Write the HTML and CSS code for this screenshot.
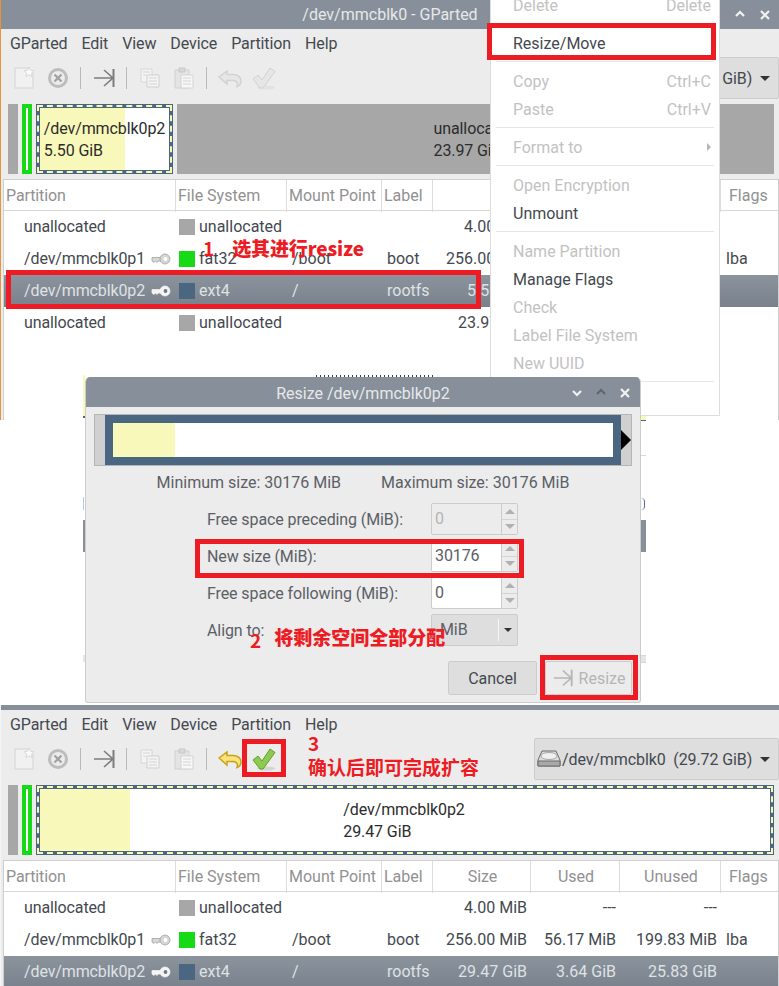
FILE: index.html
```html
<!DOCTYPE html>
<html>

<head>
    <meta charset="utf-8">
    <title>GParted resize</title>
    <link rel="stylesheet" href="styles.css">
</head>

<body>
    <!-- shared toolbar icons -->
    <svg class="defs" width="0" height="0">
        <symbol id="i-new" viewBox="0 0 24 24">
            <path d="M3 2h13l5 5v15H3z" fill="#f1f1f1" stroke="#dcdcdc" stroke-width="1.5"/>
            <path d="M17 1l1.6 3.2 3.4.5-2.5 2.4.6 3.4-3.1-1.6-3 1.6.6-3.4-2.500-2.400 3.400-.5z" fill="#fafafa" stroke="#d8d8d8"/>
        </symbol>
        <symbol id="i-cancel" viewBox="0 0 24 24">
            <circle cx="12" cy="12" r="8.5" fill="#ececec" stroke="#bdbdbd" stroke-width="3"/>
            <path d="M8.5 8.5l7 7M15.5 8.5l-7 7" stroke="#a0a0a0" stroke-width="2.2"/>
        </symbol>
        <symbol id="i-apply" viewBox="0 0 24 24">
            <path d="M2 12h19M12 4l9 8-9 8" fill="none" stroke="currentColor" stroke-width="1.6"/>
            <path d="M21.5 3v18" stroke="currentColor" stroke-width="2"/>
        </symbol>
        <symbol id="i-copy" viewBox="0 0 24 24">
            <path d="M3 3h11v13H3z" fill="#f4f4f4" stroke="#d6d6d6"/>
            <path d="M9 9h12v12H9z" fill="#f4f4f4" stroke="#cfcfcf"/>
            <path d="M5 6h7M5 9h3M11 12h8M11 15h8M11 18h8" stroke="#d4d4d4"/>
        </symbol>
        <symbol id="i-paste" viewBox="0 0 24 24">
            <path d="M3 4h14v18H3z" fill="#e4e4e4" stroke="#d0d0d0"/>
            <path d="M7 2h6v4H7z" fill="#d8d8d8" stroke="#c8c8c8"/>
            <path d="M9 9h12v13H9z" fill="#f7f7f7" stroke="#d4d4d4"/>
            <path d="M11 12h8M11 15h8M11 18h8" stroke="#d4d4d4"/>
        </symbol>
        <symbol id="i-undo" viewBox="0 0 24 24">
            <path d="M1 11L9 5v3.500h6c5 0 8 3 8 6.500 0 2.500-1.500 4.500-4 5.500 1.200-3 0-6-4-6H9V18z" fill="var(--ic-fill)" stroke="var(--ic-line)" stroke-width="1.5"/>
        </symbol>
        <symbol id="i-check" viewBox="0 0 24 24">
            <ellipse cx="14" cy="21.500" rx="9" ry="2" fill="var(--ic-shadow)"/>
            <path d="M1 13l5-4 4 5 8-12 5 3.500L11 22H8z" fill="var(--ic-fill)" stroke="var(--ic-line)"/>
        </symbol>
        <symbol id="i-key" viewBox="0 0 20 12">
            <path d="M1 4.500h9v3.500H7L6 9.500 4.500 8 3 9.500 1 8z" fill="var(--key-fill)" stroke="var(--key-line)" stroke-width=".7"/>
            <circle cx="14" cy="6" r="5" fill="var(--key-fill)" stroke="var(--key-line)" stroke-width=".7"/>
            <circle cx="14.500" cy="6" r="1.900" fill="var(--key-hole)"/>
        </symbol>
        <symbol id="i-disk" viewBox="0 0 24 18">
            <path d="M5 1h14l4 9v6H1v-6z" fill="#dcdcdc" stroke="#6b6b6b"/>
            <ellipse cx="12" cy="6" rx="8" ry="3.500" fill="#f0f0f0" stroke="#a8a8a8"/>
            <path d="M1 11h22v5H1z" fill="#a9a9a9" stroke="#6b6b6b"/>
        </symbol>
        <symbol id="i-wm-up" viewBox="0 0 12 12">
            <path d="M2 8l4-4 4 4" fill="none" stroke="currentColor" stroke-width="2.200"/>
        </symbol>
        <symbol id="i-wm-down" viewBox="0 0 12 12">
            <path d="M2 4l4 4 4-4" fill="none" stroke="currentColor" stroke-width="2.200"/>
        </symbol>
        <symbol id="i-wm-close" viewBox="0 0 12 12">
            <path d="M2 2l8 8M10 2l-8 8" fill="none" stroke="currentColor" stroke-width="2.200"/>
        </symbol>
    </svg>

    <div class="page">

        <!-- first shot: partition selected -->
        <section class="win win-top">
            <div class="titlebar">
                <span class="title-text">/dev/mmcblk0 - GParted</span>
                <svg class="wm-btn wm-up" width="12" height="12"><use href="#i-wm-up"/></svg>
                <svg class="wm-btn wm-close" width="12" height="12"><use href="#i-wm-close"/></svg>
            </div>
            <nav class="menubar">
                <span>GParted</span><span>Edit</span><span>View</span><span>Device</span><span>Partition</span><span>Help</span>
            </nav>
            <div class="toolbar">
                <span class="tool"><svg width="24" height="24"><use href="#i-new"/></svg></span>
                <span class="tool"><svg width="24" height="24"><use href="#i-cancel"/></svg></span>
                <span class="tool-sep"></span>
                <span class="tool tool-dark"><svg width="24" height="24"><use href="#i-apply"/></svg></span>
                <span class="tool-sep"></span>
                <span class="tool"><svg width="24" height="24"><use href="#i-copy"/></svg></span>
                <span class="tool"><svg width="24" height="24"><use href="#i-paste"/></svg></span>
                <span class="tool-sep"></span>
                <span class="tool tool-off"><svg width="24" height="24"><use href="#i-undo"/></svg></span>
                <span class="tool tool-off"><svg width="24" height="24"><use href="#i-check"/></svg></span>
                <div class="device-combo">
                    <svg width="24" height="18"><use href="#i-disk"/></svg>
                    <span class="device-name">/dev/mmcblk0&nbsp; (29.72 GiB)</span>
                    <span class="caret"></span>
                </div>
            </div>
            <div class="graph">
                <span class="g-unalloc g-small"></span>
                <span class="g-fat"></span>
                <div class="g-part g-part-small">
                    <div class="g-label">/dev/mmcblk0p2<br>5.50 GiB</div>
                </div>
                <div class="g-unalloc g-rest">
                    <div class="g-label">unallocated<br>23.97 GiB</div>
                </div>
            </div>
            <div class="table">
                <div class="row head">
                    <span class="c-part">Partition</span>
                    <span class="c-fs">File System</span>
                    <span class="c-mount">Mount Point</span>
                    <span class="c-label">Label</span>
                    <span class="c-num">Size</span>
                    <span class="c-num">Used</span>
                    <span class="c-num">Unused</span>
                    <span class="c-flags">Flags</span>
                </div>
                <div class="row">
                    <span class="c-part">unallocated</span>
                    <span class="c-fs"><i class="swatch sw-gray"></i>unallocated</span>
                    <span></span><span></span>
                    <span class="c-num">4.00 MiB</span><span class="c-num">---</span><span class="c-num">---</span><span></span>
                </div>
                <div class="row">
                    <span class="c-part">/dev/mmcblk0p1<svg class="key" width="20" height="12"><use href="#i-key"/></svg></span>
                    <span class="c-fs"><i class="swatch sw-green"></i>fat32</span>
                    <span class="c-mount">/boot</span>
                    <span class="c-label">boot</span>
                    <span class="c-num">256.00 MiB</span><span class="c-num">56.17 MiB</span><span class="c-num">199.83 MiB</span>
                    <span class="c-flags">lba</span>
                </div>
                <div class="row selected">
                    <span class="c-part">/dev/mmcblk0p2<svg class="key" width="20" height="12"><use href="#i-key"/></svg></span>
                    <span class="c-fs"><i class="swatch sw-navy"></i>ext4</span>
                    <span class="c-mount">/</span>
                    <span class="c-label">rootfs</span>
                    <span class="c-num">5.50 GiB</span><span class="c-num">3.64 GiB</span><span class="c-num">1.86 GiB</span><span></span>
                </div>
                <div class="row">
                    <span class="c-part">unallocated</span>
                    <span class="c-fs"><i class="swatch sw-gray"></i>unallocated</span>
                    <span></span><span></span>
                    <span class="c-num">23.97 GiB</span><span class="c-num">---</span><span class="c-num">---</span><span></span>
                </div>
            </div>
        </section>

        <!-- partition context menu -->
        <div class="menu">
            <div class="item off"><span>Delete</span><span>Delete</span></div>
            <div class="sep"></div>
            <div class="item">Resize/Move</div>
            <div class="sep"></div>
            <div class="item off"><span>Copy</span><span>Ctrl+C</span></div>
            <div class="item off"><span>Paste</span><span>Ctrl+V</span></div>
            <div class="sep"></div>
            <div class="item off"><span>Format to</span><span class="sub-arrow"></span></div>
            <div class="sep"></div>
            <div class="item off">Open Encryption</div>
            <div class="item">Unmount</div>
            <div class="sep"></div>
            <div class="item off">Name Partition</div>
            <div class="item">Manage Flags</div>
            <div class="item off">Check</div>
            <div class="item off">Label File System</div>
            <div class="item off">New UUID</div>
            <div class="sep"></div>
        </div>

        <!-- bits of a third window showing round the dialog -->
        <span class="scrap sc-text"></span>
        <span class="scrap sc-l1"></span>
        <span class="scrap sc-l2"></span>
        <span class="scrap sc-l3"></span>
        <span class="scrap sc-l4"></span>
        <span class="scrap sc-l5"></span>
        <span class="scrap sc-r1"></span>
        <span class="scrap sc-r2"></span>
        <span class="scrap sc-r3"></span>
        <span class="scrap sc-r4"></span>
        <span class="scrap sc-r5"></span>

        <!-- resize dialog -->
        <div class="dialog">
            <div class="dlg-title">
                <span class="title-text">Resize /dev/mmcblk0p2</span>
                <svg class="wm-btn dlg-down" width="12" height="12"><use href="#i-wm-down"/></svg>
                <svg class="wm-btn dlg-up" width="12" height="12"><use href="#i-wm-up"/></svg>
                <svg class="wm-btn dlg-close" width="12" height="12"><use href="#i-wm-close"/></svg>
            </div>
            <div class="slider">
                <div class="slider-part">
                    <div class="slider-fill"></div>
                </div>
                <span class="slider-grip"></span>
            </div>
            <div class="limits">
                <span>Minimum size: 30176 MiB</span>
                <span>Maximum size: 30176 MiB</span>
            </div>
            <div class="form">
                <label>Free space preceding (MiB):</label>
                <div class="spin spin-off"><span class="spin-val">0</span><span class="spin-btns"><i class="up"></i><i class="down"></i></span></div>
                <label>New size (MiB):</label>
                <div class="spin"><span class="spin-val">30176</span><span class="spin-btns"><i class="up"></i><i class="down"></i></span></div>
                <label>Free space following (MiB):</label>
                <div class="spin"><span class="spin-val">0</span><span class="spin-btns"><i class="up"></i><i class="down"></i></span></div>
                <label>Align to:</label>
                <div class="align-combo"><span class="align-val">MiB</span><span class="align-btn"><span class="caret caret-small"></span></span></div>
            </div>
            <div class="dlg-buttons">
                <button class="btn btn-cancel">Cancel</button>
                <button class="btn btn-resize"><svg width="22" height="22"><use href="#i-apply"/></svg>Resize</button>
            </div>
        </div>

        <!-- second shot: operation queued -->
        <section class="win win-bottom">
            <div class="titlebar titlebar-cut"></div>
            <nav class="menubar">
                <span>GParted</span><span>Edit</span><span>View</span><span>Device</span><span>Partition</span><span>Help</span>
            </nav>
            <div class="toolbar">
                <span class="tool"><svg width="24" height="24"><use href="#i-new"/></svg></span>
                <span class="tool"><svg width="24" height="24"><use href="#i-cancel"/></svg></span>
                <span class="tool-sep"></span>
                <span class="tool tool-dark"><svg width="24" height="24"><use href="#i-apply"/></svg></span>
                <span class="tool-sep"></span>
                <span class="tool"><svg width="24" height="24"><use href="#i-copy"/></svg></span>
                <span class="tool"><svg width="24" height="24"><use href="#i-paste"/></svg></span>
                <span class="tool-sep"></span>
                <span class="tool tool-undo"><svg width="24" height="24"><use href="#i-undo"/></svg></span>
                <span class="tool tool-ok"><svg width="24" height="24"><use href="#i-check"/></svg></span>
                <div class="device-combo">
                    <svg width="24" height="18"><use href="#i-disk"/></svg>
                    <span class="device-name">/dev/mmcblk0&nbsp; (29.72 GiB)</span>
                    <span class="caret"></span>
                </div>
            </div>
            <div class="graph">
                <span class="g-unalloc g-small"></span>
                <span class="g-fat"></span>
                <div class="g-part g-part-full">
                    <div class="g-label">/dev/mmcblk0p2<br>29.47 GiB</div>
                </div>
            </div>
            <div class="table">
                <div class="row head">
                    <span class="c-part">Partition</span>
                    <span class="c-fs">File System</span>
                    <span class="c-mount">Mount Point</span>
                    <span class="c-label">Label</span>
                    <span class="c-num c-mid">Size</span>
                    <span class="c-num c-mid">Used</span>
                    <span class="c-num c-mid">Unused</span>
                    <span class="c-flags">Flags</span>
                </div>
                <div class="row">
                    <span class="c-part">unallocated</span>
                    <span class="c-fs"><i class="swatch sw-gray"></i>unallocated</span>
                    <span></span><span></span>
                    <span class="c-num">4.00 MiB</span><span class="c-num">---</span><span class="c-num">---</span><span></span>
                </div>
                <div class="row">
                    <span class="c-part">/dev/mmcblk0p1<svg class="key" width="20" height="12"><use href="#i-key"/></svg></span>
                    <span class="c-fs"><i class="swatch sw-green"></i>fat32</span>
                    <span class="c-mount">/boot</span>
                    <span class="c-label">boot</span>
                    <span class="c-num">256.00 MiB</span><span class="c-num">56.17 MiB</span><span class="c-num">199.83 MiB</span>
                    <span class="c-flags">lba</span>
                </div>
                <div class="row selected">
                    <span class="c-part">/dev/mmcblk0p2<svg class="key" width="20" height="12"><use href="#i-key"/></svg></span>
                    <span class="c-fs"><i class="swatch sw-navy"></i>ext4</span>
                    <span class="c-mount">/</span>
                    <span class="c-label">rootfs</span>
                    <span class="c-num">29.47 GiB</span><span class="c-num">3.64 GiB</span><span class="c-num">25.83 GiB</span><span></span>
                </div>
            </div>
        </section>

        <!-- red annotations -->
        <span class="mark mark-menu"></span>
        <span class="mark mark-row"></span>
        <span class="mark mark-size"></span>
        <span class="mark mark-resize"></span>
        <span class="mark mark-check"></span>
        <span class="note note-1">1<b>选其进行resize</b></span>
        <span class="note note-2">2<b>将剩余空间全部分配</b></span>
        <span class="note note-3">3<br>确认后即可完成扩容</span>
    </div>
</body>

</html>
```

FILE: styles.css
```css
body {
    margin: 0;
    background-color: #ffffff;
    font-family: "Roboto", "Noto Sans CJK SC", sans-serif;
    font-size: 16px;
    color: #43494f;
}

.defs {
    position: absolute;
}

.page {
    position: relative;
    width: 779px;
    height: 986px;
    overflow: hidden;
    background-color: #ffffff;
}

/* main windows */
.win {
    position: absolute;
    left: 0;
    width: 779px;
    overflow: hidden;
    background-color: #ececec;
}

.win-top {
    top: 0;
    height: 420px;
    border-left: 1px solid #e8953a;
    box-sizing: border-box;
}

.win-bottom {
    top: 705px;
    height: 281px;
    border-left: 1px solid #f5f5f5;
    box-sizing: border-box;
}

.titlebar {
    position: relative;
    height: 29px;
    background-color: #87909a;
    text-align: center;
    line-height: 29px;
}

.titlebar-cut {
    height: 5px;
}

.title-text {
    color: #e6e8ea;
}

.wm-btn {
    position: absolute;
    color: #f2f2f2;
}

.wm-up {
    left: 733px;
    top: 8px;
}

.wm-close {
    left: 758px;
    top: 9px;
}

.menubar {
    display: flex;
    gap: 14px;
    height: 28px;
    padding-left: 9px;
    line-height: 29px;
    letter-spacing: -0.1px;
}

.toolbar {
    display: flex;
    align-items: center;
    height: 42px;
    padding-left: 6px;
}

.tool {
    display: flex;
    justify-content: center;
    width: 34px;
    --ic-fill: #f1f1f1;
    --ic-line: #dcdcdc;
    --ic-shadow: #e2e2e2;
}

.tool-dark {
    color: #7d7d7d;
}

.tool-off {
    --ic-fill: #e6e6e6;
    --ic-line: #d2d2d2;
}

.tool-undo {
    --ic-fill: #fbe27a;
    --ic-line: #c9a21c;
}

.tool-ok {
    --ic-fill: #8ccb50;
    --ic-line: #5f9e32;
    --ic-shadow: #d4d4d4;
}

.tool-sep {
    width: 1px;
    height: 22px;
    margin: 0 6px 0 5px;
    background-color: #b9b9b9;
}

.device-combo {
    display: flex;
    align-items: center;
    box-sizing: border-box;
    width: 245px;
    height: 42px;
    margin-left: auto;
    padding-left: 2px;
    background-color: #dedede;
    border: 1px solid #cccccc;
    border-radius: 2px;
}

.device-name {
    margin-left: 1px;
    white-space: pre;
    letter-spacing: -0.1px;
}

.caret {
    display: inline-block;
    margin-left: 8px;
    border-top: 5px solid #333333;
    border-left: 5px solid transparent;
    border-right: 5px solid transparent;
}

.caret-small {
    margin: 0;
    border-top-width: 4px;
    border-left-width: 4px;
    border-right-width: 4px;
}

/* partition graph */
.graph {
    display: flex;
    gap: 4px;
    height: 70px;
    margin: 5px 5px 0 7px;
    color: #2c2c2c;
}

.g-unalloc {
    display: flex;
    align-items: center;
    justify-content: center;
    background-color: #a7a7a7;
}

.g-small {
    width: 10px;
}

.g-rest {
    flex: 1;
}

.g-fat {
    box-sizing: border-box;
    width: 10px;
    background-color: #ffffff;
    border: 4px solid #16da16;
}

.g-part {
    display: flex;
    align-items: center;
    justify-content: center;
    box-sizing: border-box;
    border: 4px solid #4b6680;
    outline: 2px dashed #f8f8b6;
    outline-offset: -3px;
}

.g-part-small {
    width: 137px;
    background: linear-gradient(to right, #f8f8ba 85px, #ffffff 85px);
}

.g-part-full {
    flex: 1;
    background: linear-gradient(to right, #f8f8ba 90px, #ffffff 90px);
}

.g-label {
    padding-top: 2px;
    line-height: 22px;
    letter-spacing: -0.1px;
}

.g-rest .g-label,
.g-part-full .g-label {
    padding-right: 2px;
}

/* partition table */
.table {
    height: 400px;
    margin: 5px 0 0 2px;
    background-color: #ffffff;
    border-top: 1px solid #cfcfcf;
    border-left: 1px solid #cfcfcf;
    border-right: 1px solid #cfcfcf;
}

.row {
    display: grid;
    grid-template-columns: 172px 111px 95px 51px 98px 89px 101px 1fr;
    height: 32px;
    line-height: 32px;
    white-space: nowrap;
}

.head {
    height: 30px;
    line-height: 32px;
    color: #919191;
    border-bottom: 1px solid #d8d8d8;
}

.head > span {
    border-right: 1px solid #dcdcdc;
}

.head > span:last-child {
    border-right: none;
}

.c-part {
    display: flex;
    align-items: center;
    padding-left: 20px;
    letter-spacing: -0.12px;
}

.c-fs {
    display: flex;
    align-items: center;
    padding-left: 3px;
}

.c-mount,
.c-label,
.c-flags {
    padding-left: 5px;
}

.c-num {
    padding-right: 4px;
    text-align: right;
}

.head .c-part,
.head .c-fs,
.head .c-mount,
.head .c-label {
    padding-left: 2px;
}

.head .c-flags {
    padding-left: 8px;
}

.c-mid {
    padding-right: 0;
    padding-left: 2px;
    text-align: center;
}

.key {
    margin-left: 6px;
    --key-fill: #d6d6d6;
    --key-line: #9a9a9a;
    --key-hole: #ffffff;
}

.selected {
    color: #dfe2e5;
    background: linear-gradient(to bottom, #8b939d, #79828c);
}

.selected .key {
    --key-fill: #f4f4f4;
    --key-line: #f4f4f4;
    --key-hole: #6f7780;
}

.swatch {
    display: inline-block;
    width: 16px;
    height: 16px;
    margin-right: 4px;
}

.sw-gray {
    background-color: #a7a7a7;
}

.sw-green {
    background-color: #16da16;
}

.sw-navy {
    background-color: #4b6680;
}

/* context menu */
.menu {
    position: absolute;
    left: 490px;
    top: -10px;
    box-sizing: border-box;
    width: 230px;
    height: 426px;
    padding-right: 5px;
    background-color: #ffffff;
    border: 1px solid #dddddd;
}

.item {
    display: flex;
    justify-content: space-between;
    align-items: center;
    height: 28px;
    padding-left: 22px;
    padding-right: 3px;
}

.item.off {
    color: #c2c2c2;
}

.sep {
    height: 1px;
    margin: 4px 0 5px 5px;
    background-color: #e6e6e6;
}

.sub-arrow {
    border-left: 4px solid #b5b5b5;
    border-top: 4px solid transparent;
    border-bottom: 4px solid transparent;
}

/* leftovers around the dialog */
.scrap {
    position: absolute;
}

.sc-text {
    left: 316px;
    top: 375px;
    width: 117px;
    height: 2px;
    background: repeating-linear-gradient(to right, #39424f 0, #39424f 1px, #ffffff 1px, #ffffff 4px);
}

.sc-l1 {
    left: 83px;
    top: 375px;
    width: 2px;
    height: 41px;
    background-color: #f8f8ba;
}

.sc-l2 {
    left: 83px;
    top: 416px;
    width: 2px;
    height: 2px;
    background-color: #4b6680;
}

.sc-l3 {
    left: 83px;
    top: 520px;
    width: 2px;
    height: 32px;
    background-color: #87909a;
}

.sc-l4 {
    left: 83px;
    top: 655px;
    width: 2px;
    height: 7px;
    background-color: #e6e6e6;
}

.sc-l5 {
    left: 83px;
    top: 497px;
    width: 1px;
    height: 13px;
    background-color: #a9cdea;
}

.sc-r1 {
    left: 641px;
    top: 416px;
    width: 5px;
    height: 4px;
    background-color: #f8f8ba;
    border-bottom: 1px solid #4b6680;
}

.sc-r2 {
    left: 641px;
    top: 455px;
    width: 5px;
    height: 1px;
    background-color: #d8d8d8;
}

.sc-r3 {
    left: 641px;
    top: 520px;
    width: 5px;
    height: 32px;
    background-color: #87909a;
}

.sc-r4 {
    left: 641px;
    top: 655px;
    width: 5px;
    height: 6px;
    background-color: #e6e6e6;
    border-top: 1px solid #d8d8d8;
    border-bottom: 1px solid #d8d8d8;
}

.sc-r5 {
    left: 641px;
    top: 498px;
    width: 3px;
    height: 12px;
    border-right: 1px solid #4a6f9a;
    border-radius: 0 4px 4px 0;
}

/* resize dialog */
.dialog {
    position: absolute;
    left: 85px;
    top: 377px;
    box-sizing: border-box;
    width: 556px;
    height: 326px;
    overflow: hidden;
    background-color: #ececec;
    border: 1px solid #cccccc;
    border-top: none;
    border-radius: 5px 5px 3px 3px;
}

.dlg-title {
    position: relative;
    height: 30px;
    margin: 0 -1px;
    background-color: #87909a;
    text-align: center;
    line-height: 33px;
}

.dlg-down {
    left: 486px;
    top: 10px;
}

.dlg-up {
    left: 510px;
    top: 9px;
    color: #5f6770;
}

.dlg-close {
    left: 534px;
    top: 10px;
}

.slider {
    position: relative;
    box-sizing: border-box;
    height: 52px;
    margin: 7px 8px 0 8px;
    padding: 0 10px;
    background-color: #d0d0d0;
    border: 1px solid #b5b5b5;
}

.slider-part {
    box-sizing: border-box;
    height: 50px;
    padding: 8px;
    background-color: #4b6680;
}

.slider-fill {
    height: 34px;
    background: linear-gradient(to right, #f8f8ba 62px, #ffffff 62px);
}

.slider-grip {
    position: absolute;
    right: 0;
    top: 15px;
    border-left: 10px solid #000000;
    border-top: 10px solid transparent;
    border-bottom: 10px solid transparent;
}

.limits {
    display: flex;
    justify-content: center;
    gap: 40px;
    height: 37px;
    line-height: 34px;
    color: #5b6066;
}

.form {
    display: grid;
    grid-template-columns: 224px 87px;
    grid-auto-rows: 32px;
    row-gap: 5px;
    justify-content: center;
    align-items: center;
    padding-right: 1px;
    color: #5b6066;
    letter-spacing: -0.1px;
}

.spin {
    display: flex;
    box-sizing: border-box;
    height: 32px;
    background-color: #ffffff;
    border: 1px solid #cccccc;
    border-radius: 2px;
}

.spin-off {
    background-color: #ececec;
    color: #b5b5b5;
}

.spin-val {
    flex: 1;
    padding-left: 3px;
    line-height: 30px;
}

.spin-btns {
    display: flex;
    flex-direction: column;
    width: 15px;
    background-color: #ececec;
    border-left: 1px solid #cccccc;
}

.spin-btns i {
    flex: 1;
    display: flex;
    align-items: center;
    justify-content: center;
}

.spin-btns .up {
    border-bottom: 1px solid #d4d4d4;
}

.spin-btns .up::before {
    content: "";
    border-bottom: 5px solid #b0b0b0;
    border-left: 5px solid transparent;
    border-right: 5px solid transparent;
}

.spin-btns .down::before {
    content: "";
    border-top: 5px solid #b0b0b0;
    border-left: 5px solid transparent;
    border-right: 5px solid transparent;
}

.align-combo {
    display: flex;
    box-sizing: border-box;
    height: 32px;
    background-color: #dedede;
    border: 1px solid #cccccc;
    border-radius: 2px;
    line-height: 30px;
}

.align-val {
    flex: 1;
    margin: 4px 0;
    padding-left: 8px;
    line-height: 22px;
    border-right: 1px solid #f5f5f5;
}

.align-btn {
    display: flex;
    align-items: center;
    justify-content: center;
    width: 18px;
}

.dlg-buttons {
    display: flex;
    justify-content: flex-end;
    gap: 8px;
    margin-top: 15px;
    padding-right: 8px;
}

.btn {
    display: flex;
    align-items: center;
    justify-content: center;
    box-sizing: border-box;
    height: 34px;
    font-family: inherit;
    font-size: 16px;
    border: 1px solid #cccccc;
    border-radius: 2px;
}

.btn-cancel {
    width: 89px;
    background-color: #dedede;
    color: #43494f;
}

.btn-resize {
    gap: 5px;
    width: 87px;
    padding: 0;
    background-color: #ececec;
    color: #b5b5b5;
}

/* red annotations on top of it all */
.mark {
    position: absolute;
    box-sizing: border-box;
    border: 5px solid #ed1c24;
}

.mark-menu {
    left: 487px;
    top: 23px;
    width: 229px;
    height: 37px;
}

.mark-row {
    left: 6px;
    top: 270px;
    width: 475px;
    height: 39px;
}

.mark-size {
    left: 195px;
    top: 539px;
    width: 329px;
    height: 39px;
}

.mark-resize {
    left: 540px;
    top: 655px;
    width: 98px;
    height: 45px;
}

.mark-check {
    left: 242px;
    top: 739px;
    width: 44px;
    height: 38px;
}

.note {
    position: absolute;
    font-family: "Noto Sans CJK SC", sans-serif;
    font-size: 19px;
    font-weight: bold;
    line-height: 24px;
    color: #ed1c24;
    white-space: nowrap;
}

.note b {
    margin-left: 18px;
}

.note-1 {
    left: 203px;
    top: 236px;
    letter-spacing: -0.1px;
}

.note-2 {
    left: 250px;
    top: 625px;
}

.note-2 b {
    margin-left: 13px;
    vertical-align: 3px;
}

.note-3 {
    left: 308px;
    top: 731px;
}
```
